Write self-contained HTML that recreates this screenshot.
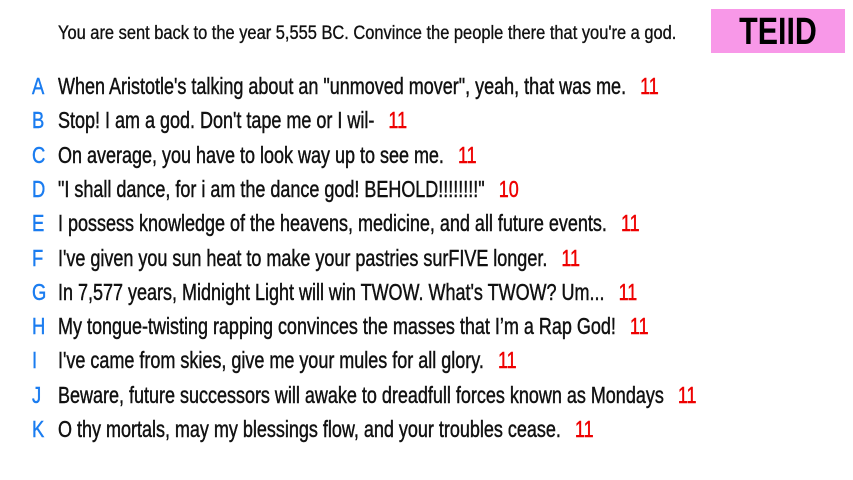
<!DOCTYPE html>
<html><head><meta charset="utf-8"><style>
html,body{margin:0;padding:0;background:#fff;width:853px;height:480px;overflow:hidden;position:relative;font-family:"Liberation Sans",sans-serif;color:#111}
.h{position:absolute;left:58px;top:22px;font-size:19px;-webkit-text-stroke:0.35px #111;white-space:nowrap;transform:scaleX(0.865);transform-origin:left top;line-height:24px}
.box{position:absolute;left:711px;top:9px;width:134px;height:44px;background:#f898e8}
.box span{position:absolute;left:0;right:0;top:3px;text-align:center;font-size:38px;font-weight:bold;color:#000;transform:scaleX(0.8);line-height:40px}
.r{position:absolute;left:0;height:30px;line-height:30px;white-space:nowrap;font-size:23px;-webkit-text-stroke:0.45px currentColor}
.l{position:absolute;left:32px;color:#1a7cf0;transform:scaleX(0.8);transform-origin:left center}
.t{position:absolute;left:58px;transform:scaleX(0.782);transform-origin:left center}
.n{color:#e00;margin-left:18px}
</style></head><body>
<div class="h">You are sent back to the year 5,555 BC. Convince the people there that you're a god.</div>
<div class="box"><span>TEIID</span></div>
<div class="r" style="top:71px"><span class="l">A</span><span class="t">When Aristotle's talking about an "unmoved mover", yeah, that was me.<span class="n">11</span></span></div>
<div class="r" style="top:105px"><span class="l">B</span><span class="t">Stop! I am a god. Don't tape me or I wil-<span class="n">11</span></span></div>
<div class="r" style="top:140px"><span class="l">C</span><span class="t">On average, you have to look way up to see me.<span class="n">11</span></span></div>
<div class="r" style="top:174px"><span class="l">D</span><span class="t">"I shall dance, for i am the dance god! BEHOLD!!!!!!!!"<span class="n">10</span></span></div>
<div class="r" style="top:208px"><span class="l">E</span><span class="t">I possess knowledge of the heavens, medicine, and all future events.<span class="n">11</span></span></div>
<div class="r" style="top:243px"><span class="l">F</span><span class="t">I've given you sun heat to make your pastries surFIVE longer.<span class="n">11</span></span></div>
<div class="r" style="top:277px"><span class="l">G</span><span class="t">In 7,577 years, Midnight Light will win TWOW. What's TWOW? Um...<span class="n">11</span></span></div>
<div class="r" style="top:311px"><span class="l">H</span><span class="t">My tongue-twisting rapping convinces the masses that I’m a Rap God!<span class="n">11</span></span></div>
<div class="r" style="top:345px"><span class="l">I</span><span class="t">I've came from skies, give me your mules for all glory.<span class="n">11</span></span></div>
<div class="r" style="top:380px"><span class="l">J</span><span class="t">Beware, future successors will awake to dreadfull forces known as Mondays<span class="n">11</span></span></div>
<div class="r" style="top:414px"><span class="l">K</span><span class="t">O thy mortals, may my blessings flow, and your troubles cease.<span class="n">11</span></span></div>
</body></html>
